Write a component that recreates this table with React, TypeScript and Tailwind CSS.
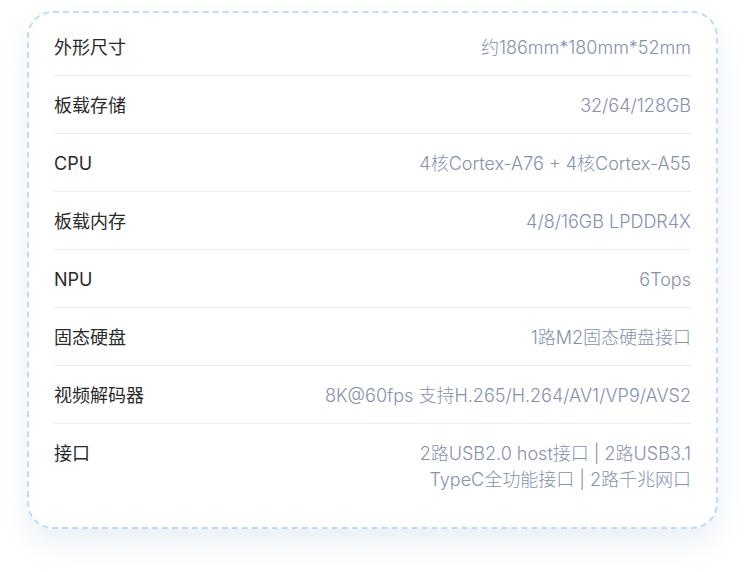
import React from "react";

const rows: { label: string; value: string[] }[] = [
  { label: "外形尺寸", value: ["约186mm*180mm*52mm"] },
  { label: "板载存储", value: ["32/64/128GB"] },
  { label: "CPU", value: ["4核Cortex-A76 + 4核Cortex-A55"] },
  { label: "板载内存", value: ["4/8/16GB LPDDR4X"] },
  { label: "NPU", value: ["6Tops"] },
  { label: "固态硬盘", value: ["1路M2固态硬盘接口"] },
  { label: "视频解码器", value: ["8K@60fps 支持H.265/H.264/AV1/VP9/AVS2"] },
  { label: "接口", value: ["2路USB2.0 host接口 | 2路USB3.1", "TypeC全功能接口 | 2路千兆网口"] },
];

function Row({ label, value, last }: { label: string; value: string[]; last: boolean }) {
  return (
    <div
      className={
        last
          ? "flex justify-between pt-[17px]"
          : "flex h-[58px] items-center justify-between border-b border-[#e6eef8] pt-[2px]"
      }
    >
      <div className="text-[18px] leading-[26px] text-[#2b2b2b]">{label}</div>
      <div className="text-right text-[18px] font-light leading-[26px] text-[#8590b2]">
        {value.map((v) => (
          <div key={v}>{v}</div>
        ))}
      </div>
    </div>
  );
}

export default function App() {
  return (
    <div className="w-[744px] h-[572px] bg-white pt-[11px] pl-[27px] font-['Inter','Noto_Sans_CJK_SC',sans-serif]">
      <div className="w-[691px] h-[518px] rounded-[26px] border-2 border-dashed border-[#bfdbfb] bg-white px-[25px] pt-[5px] shadow-[0_14px_30px_rgba(180,200,225,0.28)]">
        {rows.map((r, i) => (
          <Row key={r.label} label={r.label} value={r.value} last={i === rows.length - 1} />
        ))}
      </div>
    </div>
  );
}
